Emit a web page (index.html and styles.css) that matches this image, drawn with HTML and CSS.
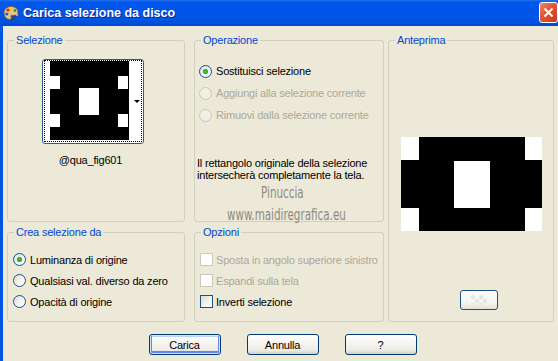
FILE: index.html
```html
<!DOCTYPE html>
<html lang="it">
<head>
    <meta charset="UTF-8">
    <title>Carica selezione da disco</title>
    <link rel="stylesheet" href="styles.css">
</head>
<body>
    <div class="window">
        <div class="titlebar">
            <svg class="app-icon" viewBox="0 0 16 16">
                <path d="M8 1.5 C3.5 1.5 1 4.5 1 8 C1 11.5 3.5 14.5 7 14.5 C8.5 14.5 8.5 12.8 8 12 C7.4 11 8.2 10 9.5 10.3 C12.5 11 15 9.5 15 7 C15 3.8 12 1.5 8 1.5 Z" fill="#e6c48f" stroke="#7a5526" stroke-width="0.8"/>
                <circle cx="5" cy="5" r="1.6" fill="#e0261c"/>
                <circle cx="8.5" cy="3.9" r="1.5" fill="#f3d21b"/>
                <circle cx="3.8" cy="9" r="1.6" fill="#1f5fd8"/>
                <circle cx="12" cy="5.5" r="1.4" fill="#1aa23a"/>
                <path d="M14.5 9.5 L8.5 15" stroke="#5b3a1c" stroke-width="1.6" stroke-linecap="round"/>
                <path d="M14.8 9.2 L13.4 10.6" stroke="#c9c9c9" stroke-width="1.8"/>
            </svg>
            <span class="title">Carica selezione da disco</span>
            <div class="close-btn">
                <svg viewBox="0 0 19 21"><path d="M5 6 L14 15 M14 6 L5 15" stroke="#fff" stroke-width="2.2"/></svg>
            </div>
        </div>

        <div class="client">
            <div class="panels">
                <fieldset class="group sel-group">
                    <legend>Selezione</legend>
                    <div class="sel-body">
                        <div class="thumb-box">
                            <div class="thumb-focus">
                                <svg class="thumb-img" viewBox="0 0 79 79">
                                    <rect width="79" height="79" fill="#000"/>
                                    <rect x="0" y="15" width="10" height="13" fill="#fff"/>
                                    <rect x="0" y="53" width="10" height="13" fill="#fff"/>
                                    <rect x="29" y="27" width="20" height="27" fill="#fff"/>
                                    <rect x="68" y="15" width="10" height="13" fill="#fff"/>
                                    <rect x="68" y="53" width="10" height="13" fill="#fff"/>
                                </svg>
                                <div class="thumb-strip"><span class="arrow"></span></div>
                            </div>
                        </div>
                        <div class="thumb-name">@qua_fig601</div>
                    </div>
                </fieldset>

                <fieldset class="group op-group">
                    <legend>Operazione</legend>
                    <div class="op-body">
                        <div class="opt-row"><span class="radio checked"></span>Sostituisci selezione</div>
                        <div class="opt-row disabled"><span class="radio"></span>Aggiungi alla selezione corrente</div>
                        <div class="opt-row disabled"><span class="radio"></span>Rimuovi dalla selezione corrente</div>
                        <p class="note">Il rettangolo originale della selezione<br>intersecherà completamente la tela.</p>
                    </div>
                </fieldset>

                <fieldset class="group preview-group">
                    <legend>Anteprima</legend>
                    <div class="preview-body">
                        <svg class="preview-img" viewBox="0 0 141 94">
                            <rect width="141" height="94" fill="#000"/>
                            <rect x="0" y="0" width="18" height="23" fill="#fff"/>
                            <rect x="124" y="0" width="17" height="23" fill="#fff"/>
                            <rect x="0" y="71" width="18" height="23" fill="#fff"/>
                            <rect x="124" y="71" width="17" height="23" fill="#fff"/>
                            <rect x="53" y="24" width="36" height="47" fill="#fff"/>
                        </svg>
                        <div class="bg-btn">
                            <svg viewBox="0 0 16 10">
                                <rect x="0" y="0" width="4" height="4" fill="#e6e6e6"/>
                                <rect x="8" y="0" width="4" height="4" fill="#e6e6e6"/>
                                <rect x="4" y="4" width="4" height="4" fill="#e6e6e6"/>
                                <rect x="12" y="4" width="4" height="4" fill="#e6e6e6"/>
                                <rect x="0" y="8" width="4" height="2" fill="#e6e6e6"/>
                                <rect x="8" y="8" width="4" height="2" fill="#e6e6e6"/>
                            </svg>
                        </div>
                    </div>
                </fieldset>

                <fieldset class="group crea-group">
                    <legend>Crea selezione da</legend>
                    <div class="small-body">
                        <div class="opt-row"><span class="radio checked"></span>Luminanza di origine</div>
                        <div class="opt-row"><span class="radio"></span>Qualsiasi val. diverso da zero</div>
                        <div class="opt-row"><span class="radio"></span>Opacità di origine</div>
                    </div>
                </fieldset>

                <fieldset class="group opz-group">
                    <legend>Opzioni</legend>
                    <div class="small-body">
                        <div class="opt-row disabled"><span class="check"></span>Sposta in angolo superiore sinistro</div>
                        <div class="opt-row disabled"><span class="check"></span>Espandi sulla tela</div>
                        <div class="opt-row"><span class="check"></span>Inverti selezione</div>
                    </div>
                </fieldset>
            </div>

            <div class="buttons">
                <button class="btn default">Carica</button>
                <button class="btn">Annulla</button>
                <button class="btn">?</button>
            </div>
        </div>

        <div class="watermark">
            <span class="wm-name">Pinuccia</span>
            <span class="wm-site">www.maidiregrafica.eu</span>
        </div>
    </div>
</body>
</html>
```

FILE: styles.css
```css
* {
    box-sizing: border-box;
    margin: 0;
    padding: 0;
}

body {
    font-family: "Liberation Sans", Arial, sans-serif;
    font-size: 11px;
    letter-spacing: -0.2px;
    color: #000;
    background: #ECE9D8;
}

.window {
    width: 558px;
    height: 361px;
    background: #ECE9D8;
    position: relative;
    overflow: hidden;
}

/* barra del titolo */
.titlebar {
    height: 26px;
    display: flex;
    align-items: center;
    padding-left: 3px;
    background: linear-gradient(to bottom, #2a72ee 0, #0058ee 2px, #0055e8 45%, #0053e0 85%, #0047cc 100%);
}

.app-icon {
    width: 16px;
    height: 16px;
    margin-right: 4px;
}

.title {
    flex: 1;
    color: #fff;
    font-weight: bold;
    font-size: 12.5px;
    letter-spacing: 0;
    text-shadow: 1px 1px 0 #0a2a9a;
}

.close-btn {
    width: 19px;
    height: 21px;
    align-self: flex-start;
    margin-top: 2px;
    border: 1px solid #fff;
    border-radius: 3px;
    background: linear-gradient(135deg, #e98a6c 0, #e2583a 40%, #c53a1c 100%);
}

.close-btn svg {
    display: block;
    width: 17px;
    height: 19px;
}

.client {
    height: 335px;
    border-left: 3px solid #0055e5;
    padding: 8px 0 0 4px;
}

.panels {
    display: grid;
    grid-template-columns: 187px 194px 166px;
    grid-template-rows: 188px 96px;
    row-gap: 4px;
}

/* riquadri */
.group {
    border: 1px solid #d0d0bf;
    border-radius: 3px;
    min-width: 0;
    padding: 0;
}

.group legend {
    margin-left: 6px;
    padding: 0 2px;
    line-height: 12px;
    color: #0046d5;
}

.sel-group { width: 178px; }
.op-group { width: 190px; }
.preview-group { width: 166px; grid-row: 1 / 3; grid-column: 3; }
.crea-group { width: 178px; }
.opz-group { width: 190px; }

.sel-body {
    padding: 13px 0 0 33px;
    width: 136px;
    display: flex;
    flex-direction: column;
    align-items: center;
}

.thumb-box {
    width: 102px;
    height: 85px;
    border: 1px solid #2c5a94;
    border-radius: 3px;
    background: #fff;
    padding: 0 1px 1px;
}

.thumb-focus {
    height: 100%;
    border: 1px dotted #000;
    display: flex;
    padding-left: 5px;
}

.thumb-img {
    width: 79px;
    height: 79px;
    display: block;
}

.thumb-strip {
    flex: 1;
    display: flex;
    justify-content: flex-end;
    align-items: center;
    padding-right: 1px;
}

.arrow {
    width: 0;
    height: 0;
    border-left: 3px solid transparent;
    border-right: 3px solid transparent;
    border-top: 3px solid #000;
    margin-top: 1px;
}

.thumb-name {
    margin-top: 10px;
    margin-right: 4px;
    line-height: 13px;
}

/* opzioni e radio */
.op-body {
    padding: 14px 0 0 4px;
}

.opt-row {
    height: 22px;
    display: flex;
    align-items: center;
    gap: 4px;
    white-space: nowrap;
}

.opt-row.disabled {
    color: #aca899;
}

.radio {
    width: 13px;
    height: 13px;
    border-radius: 50%;
    border: 1px solid #1c5180;
    background: linear-gradient(135deg, #dcdcd7 0, #f6f6f4 60%, #fff 100%);
    display: flex;
    align-items: center;
    justify-content: center;
    flex-shrink: 0;
}

.radio.checked::after {
    content: "";
    width: 5px;
    height: 5px;
    border-radius: 50%;
    background: radial-gradient(circle, #4dd04d 0, #21a121 60%, #1a8a1a 100%);
}

.disabled .radio {
    border-color: #cac8bb;
    background: #f1efe5;
}

.check {
    width: 13px;
    height: 13px;
    border: 1px solid #1c5180;
    background: linear-gradient(135deg, #dcdcd7 0, #f3f3ef 60%, #fff 100%);
    flex-shrink: 0;
}

.disabled .check {
    border-color: #cac8bb;
    background: #fff;
}

.note {
    margin: 31px 0 0 -2px;
    line-height: 12px;
}

.small-body {
    padding: 11px 0 0 5px;
}

.small-body .opt-row {
    height: 21px;
    gap: 3px;
}

.crea-group .opt-row {
    gap: 4px;
}

/* anteprima */
.preview-body {
    display: flex;
    flex-direction: column;
    align-items: center;
    padding-top: 91px;
}

.preview-img {
    width: 141px;
    height: 94px;
    display: block;
}

.bg-btn {
    margin: 59px 0 0 15px;
    width: 38px;
    height: 20px;
    border: 1px solid #1c5180;
    border-radius: 3px;
    background: linear-gradient(to bottom, #fff 0, #f4f3ee 70%, #e3e0d6 100%);
    display: flex;
    align-items: center;
    justify-content: center;
}

.bg-btn svg {
    width: 16px;
    height: 10px;
}

/* pulsanti */
.buttons {
    display: flex;
    justify-content: center;
    gap: 26px;
    margin-top: 12px;
}

.btn {
    width: 72px;
    height: 21px;
    border: 1px solid #003c74;
    border-radius: 3px;
    background: linear-gradient(to bottom, #fff 0, #f6f5f1 40%, #ecebe5 80%, #d6d0c5 100%);
    font-family: "Liberation Sans", Arial, sans-serif;
    font-size: 11px;
    letter-spacing: -0.2px;
    color: #000;
}

.btn.default {
    box-shadow: inset 0 0 0 1px #cee7ff, inset 0 -1px 0 2px #6982ee, inset 0 1px 0 1px #bcd4f6;
}

/* filigrana */
.watermark {
    position: absolute;
    left: 0;
    top: 0;
    color: #8c8c84;
    font-family: "DejaVu Sans Condensed", "DejaVu Sans", sans-serif;
    font-size: 16px;
    letter-spacing: 0;
    pointer-events: none;
}

.wm-name {
    position: absolute;
    left: 261px;
    top: 183px;
    transform: scaleX(0.72);
    transform-origin: left top;
    white-space: nowrap;
}

.wm-site {
    position: absolute;
    left: 227px;
    top: 205px;
    transform: scaleX(0.72);
    transform-origin: left top;
    white-space: nowrap;
}
```
